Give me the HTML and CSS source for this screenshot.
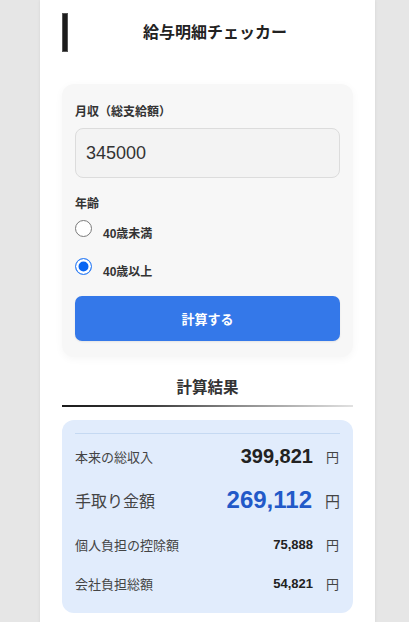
FILE: index.html
```html
<!DOCTYPE html>
<html lang="ja">
<head>
<meta charset="utf-8">
<title>給与明細チェッカー</title>
<link rel="stylesheet" href="styles.css">
</head>
<body>
<div class="page">
  <header class="header">
    <span class="bar"></span>
    <h1 class="title">給与明細チェッカー</h1>
  </header>

  <section class="form-card">
    <label class="field-label" for="salary">月収（総支給額）</label>
    <input id="salary" class="text-input" type="text" value="345000">

    <div class="field-label age-label">年齢</div>
    <div class="radio-group">
      <label class="radio-row"><input type="radio" name="age" class="radio"><span>40歳未満</span></label>
      <label class="radio-row"><input type="radio" name="age" class="radio" checked><span>40歳以上</span></label>
    </div>

    <button class="calc-btn" type="button">計算する</button>
  </section>

  <h2 class="result-heading">計算結果</h2>

  <section class="result-card">
    <div class="row row-main">
      <span class="row-label">本来の総収入</span>
      <span class="row-value"><span class="num num-lg">399,821</span><span class="yen">円</span></span>
    </div>
    <div class="row row-main">
      <span class="row-label row-label-lg">手取り金額</span>
      <span class="row-value"><span class="num num-xl">269,112</span><span class="yen yen-lg">円</span></span>
    </div>
    <div class="row row-main">
      <span class="row-label">個人負担の控除額</span>
      <span class="row-value"><span class="num">75,888</span><span class="yen">円</span></span>
    </div>
    <div class="row row-last">
      <span class="row-label">会社負担総額</span>
      <span class="row-value"><span class="num">54,821</span><span class="yen">円</span></span>
    </div>
  </section>
</div>
</body>
</html>
```

FILE: styles.css
```css
* { box-sizing: border-box; }

html, body {
  margin: 0;
  padding: 0;
  background: #e6e6e6;
  font-family: "Liberation Sans", "Noto Sans CJK JP", sans-serif;
  color: #333;
}

.page {
  width: 335px;
  min-height: 622px;
  margin-left: 40px;
  background: #ffffff;
  box-shadow: 0 0 3px rgba(0, 0, 0, 0.08);
  padding: 13px 22px 20px;
}

.header {
  display: flex;
  align-items: center;
  height: 39px;
}

.bar {
  width: 6px;
  height: 39px;
  background: #1c1c1c;
  border: 1px solid #555;
}

.title {
  flex: 1;
  margin: 0;
  padding-left: 9px;
  text-align: center;
  font-size: 16px;
  font-weight: 700;
  color: #222;
  line-height: 20px;
}

.form-card {
  margin-top: 32px;
  background: #f7f7f7;
  border-radius: 12px;
  box-shadow: 0 2px 8px rgba(0, 0, 0, 0.04);
  padding: 20px 13px 16px;
  display: flex;
  flex-direction: column;
}

.field-label {
  display: block;
  font-size: 12px;
  line-height: 16px;
  font-weight: 700;
  color: #333;
}

.text-input {
  margin-top: 8px;
  height: 50px;
  width: 100%;
  border: 1px solid #dcdcdc;
  border-radius: 8px;
  background: #f3f3f3;
  padding: 0 10px;
  font-family: "Liberation Sans", sans-serif;
  font-size: 18px;
  color: #333;
  outline: none;
}

.age-label {
  margin-top: 18px;
}

.radio-group {
  display: flex;
  flex-direction: column;
  gap: 21px;
  padding-top: 8px;
}

.radio-row {
  display: flex;
  align-items: center;
  gap: 11px;
  height: 17px;
  font-size: 12px;
  font-weight: 700;
  color: #333;
}

.radio-row span { padding-top: 8px; }

.radio {
  appearance: none;
  -webkit-appearance: none;
  margin: 0;
  width: 17px;
  height: 17px;
  border-radius: 50%;
  border: 1px solid #7a7a7a;
  background: #fff;
}

.radio:checked {
  border: 1px solid #3b86f6;
  background: #0a66f2;
  box-shadow: inset 0 0 0 2.5px #fff;
}

.calc-btn {
  margin-top: 21px;
  height: 45px;
  width: 100%;
  border: none;
  border-radius: 7px;
  background: #3478e9;
  color: #fff;
  font-family: "Liberation Sans", "Noto Sans CJK JP", sans-serif;
  font-size: 13px;
  font-weight: 700;
  box-shadow: 0 1px 2px rgba(0, 0, 0, 0.08);
}

.result-heading {
  margin: 23px 0 0;
  padding-bottom: 9px;
  text-align: center;
  font-size: 15.5px;
  line-height: 16px;
  font-weight: 700;
  color: #333;
  border-bottom: 2px solid transparent;
  border-image: linear-gradient(to right, #1a1a1a 0%, #3a3a3a 30%, #8a8a8a 60%, #e2e2e2 100%) 1;
}

.result-card {
  margin-top: 13px;
  background: #e1ecfc;
  border-radius: 12px;
  padding: 13px 13px 13px;
}

.row {
  display: flex;
  align-items: center;
  justify-content: space-between;
}

.row-main { height: 44px; }
.row-main:first-child {
  border-top: 1px solid #c5d9f2;
  height: 45px;
}
.row-last { height: 34px; }

.row-label {
  font-size: 13px;
  color: #444;
}

.row-label-lg {
  font-size: 16px;
}

.row-value {
  display: flex;
  align-items: center;
  gap: 13px;
}

.num {
  font-size: 13px;
  font-weight: 700;
  color: #222;
}

.num-lg { font-size: 20px; }

.num-xl {
  font-size: 24px;
  color: #2259c8;
}

.yen {
  font-size: 13px;
  color: #444;
  padding-right: 1px;
}

.yen-lg { font-size: 15px; padding-right: 0; }
```
